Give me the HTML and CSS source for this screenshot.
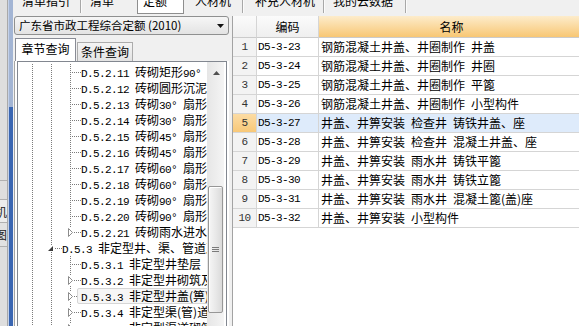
FILE: index.html
```html
<!DOCTYPE html>
<html lang="zh-CN">
<head>
<meta charset="utf-8">
<title>定额</title>
<link rel="stylesheet" href="styles.css">
</head>
<body>
<div class="app">
  <aside class="edge">
    <div class="edge-grey">
      <div class="edge-top"></div>
      <div class="edge-cell"></div>
      <div class="edge-cell frag">机</div>
      <div class="edge-cell frag tall">图</div>
      <div class="edge-rest"></div>
    </div>
    <div class="edge-blue"></div>
  </aside>

  <div class="main">
    <nav class="topbar">
      <div class="ttab t1"><span>清单指引</span></div>
      <div class="ttab t2"><span>清单</span></div>
      <div class="ttab t3 on"><span>定额</span></div>
      <div class="ttab t4"><span>人材机</span></div>
      <div class="ttab t5"><span>补充人材机</span></div>
      <div class="ttab t6"><span>我的云数据</span></div>
    </nav>

    <div class="content">
      <section class="lpanel">
        <div class="combo">
          <span class="combo-text">广东省市政工程综合定额 (2010)</span>
          <svg class="caret" width="7" height="4" viewBox="0 0 7 4"><path d="M0 0H7L3.5 4Z" fill="#111"/></svg>
        </div>
        <div class="qtabs">
          <div class="qtab on">章节查询</div>
          <div class="qtab">条件查询</div>
        </div>
        <div class="page">
          <div class="treebox">
            <div class="tree">
              <div class="row"><span class="gd"></span><span class="gd"></span><span class="nd"></span><span class="txt"><span class="m">D.5.2.11 </span>砖砌矩形<span class="m">90° </span>三通雨水检查井</span></div>
              <div class="row"><span class="gd"></span><span class="gd"></span><span class="nd"></span><span class="txt"><span class="m">D.5.2.12 </span>砖砌圆形沉泥井</span></div>
              <div class="row"><span class="gd"></span><span class="gd"></span><span class="nd"></span><span class="txt"><span class="m">D.5.2.13 </span>砖砌<span class="m">30° </span>扇形雨水检查井</span></div>
              <div class="row"><span class="gd"></span><span class="gd"></span><span class="nd"></span><span class="txt"><span class="m">D.5.2.14 </span>砖砌<span class="m">30° </span>扇形污水检查井</span></div>
              <div class="row"><span class="gd"></span><span class="gd"></span><span class="nd"></span><span class="txt"><span class="m">D.5.2.15 </span>砖砌<span class="m">45° </span>扇形雨水检查井</span></div>
              <div class="row"><span class="gd"></span><span class="gd"></span><span class="nd"></span><span class="txt"><span class="m">D.5.2.16 </span>砖砌<span class="m">45° </span>扇形污水检查井</span></div>
              <div class="row"><span class="gd"></span><span class="gd"></span><span class="nd"></span><span class="txt"><span class="m">D.5.2.17 </span>砖砌<span class="m">60° </span>扇形雨水检查井</span></div>
              <div class="row"><span class="gd"></span><span class="gd"></span><span class="nd"></span><span class="txt"><span class="m">D.5.2.18 </span>砖砌<span class="m">60° </span>扇形污水检查井</span></div>
              <div class="row"><span class="gd"></span><span class="gd"></span><span class="nd"></span><span class="txt"><span class="m">D.5.2.19 </span>砖砌<span class="m">90° </span>扇形雨水检查井</span></div>
              <div class="row"><span class="gd"></span><span class="gd"></span><span class="nd"></span><span class="txt"><span class="m">D.5.2.20 </span>砖砌<span class="m">90° </span>扇形污水检查井</span></div>
              <div class="row"><span class="gd"></span><span class="gd"></span><span class="nd last"><svg class="exp" width="7" height="9" viewBox="0 0 7 9"><rect width="7" height="9" fill="#fff"/><path d="M1.5 0.5L5.5 4.5L1.5 8.5Z" fill="#fff" stroke="#8c8c8c"/></svg></span><span class="txt"><span class="m">D.5.2.21 </span>砖砌雨水进水井</span></div>
              <div class="row"><span class="gd"></span><span class="nd"><svg class="col" width="7" height="7" viewBox="0 0 7 7"><rect width="7" height="7" fill="#fff"/><path d="M6 1V6H1Z" fill="#3c3c3c"/></svg></span><span class="txt"><span class="m">D.5.3 </span>非定型井、渠、管道及构筑物</span></div>
              <div class="row"><span class="gd"></span><span class="gd"></span><span class="nd"></span><span class="txt"><span class="m">D.5.3.1 </span>非定型井垫层</span></div>
              <div class="row"><span class="gd"></span><span class="gd"></span><span class="nd"><svg class="exp" width="7" height="9" viewBox="0 0 7 9"><rect width="7" height="9" fill="#fff"/><path d="M1.5 0.5L5.5 4.5L1.5 8.5Z" fill="#fff" stroke="#8c8c8c"/></svg></span><span class="txt"><span class="m">D.5.3.2 </span>非定型井砌筑及抹灰</span></div>
              <div class="row"><span class="gd"></span><span class="gd"></span><span class="nd"><svg class="exp" width="7" height="9" viewBox="0 0 7 9"><rect width="7" height="9" fill="#fff"/><path d="M1.5 0.5L5.5 4.5L1.5 8.5Z" fill="#fff" stroke="#8c8c8c"/></svg></span><span class="txt hl"><span class="m">D.5.3.3 </span>非定型井盖(箅)制作安装</span></div>
              <div class="row"><span class="gd"></span><span class="gd"></span><span class="nd"><svg class="exp" width="7" height="9" viewBox="0 0 7 9"><rect width="7" height="9" fill="#fff"/><path d="M1.5 0.5L5.5 4.5L1.5 8.5Z" fill="#fff" stroke="#8c8c8c"/></svg></span><span class="txt"><span class="m">D.5.3.4 </span>非定型渠(管)道垫层</span></div>
              <div class="row"><span class="gd"></span><span class="gd"></span><span class="nd"><svg class="exp" width="7" height="9" viewBox="0 0 7 9"><rect width="7" height="9" fill="#fff"/><path d="M1.5 0.5L5.5 4.5L1.5 8.5Z" fill="#fff" stroke="#8c8c8c"/></svg></span><span class="txt"><span class="m">D.5.3.5 </span>非定型渠道砌筑</span></div>
            </div>
            <div class="vscroll">
              <div class="sbtn"><svg width="7" height="4" viewBox="0 0 7 4"><path d="M3.5 0L7 4H0Z" fill="#505050"/></svg></div>
              <div class="thumb">
                <svg width="7" height="6" viewBox="0 0 7 6"><path d="M0 0.5H7M0 2.5H7M0 4.5H7" stroke="#7a7a7a" stroke-width="1"/></svg>
              </div>
            </div>
          </div>
        </div>
      </section>

      <section class="grid">
        <div class="c h"></div>
        <div class="c h">编码</div>
        <div class="c h sort">名称</div>

        <div class="c n m">1</div><div class="c code m">D5-3-23</div><div class="c name">钢筋混凝土井盖、井圈制作 井盖</div>
        <div class="c n m">2</div><div class="c code m">D5-3-24</div><div class="c name">钢筋混凝土井盖、井圈制作 井圈</div>
        <div class="c n m">3</div><div class="c code m">D5-3-25</div><div class="c name">钢筋混凝土井盖、井圈制作 平篦</div>
        <div class="c n m">4</div><div class="c code m">D5-3-26</div><div class="c name">钢筋混凝土井盖、井圈制作 小型构件</div>
        <div class="c n m cur">5</div><div class="c code m sel">D5-3-27</div><div class="c name sel">井盖、井箅安装 检查井 铸铁井盖、座</div>
        <div class="c n m">6</div><div class="c code m">D5-3-28</div><div class="c name">井盖、井箅安装 检查井 混凝土井盖、座</div>
        <div class="c n m">7</div><div class="c code m">D5-3-29</div><div class="c name">井盖、井箅安装 雨水井 铸铁平篦</div>
        <div class="c n m">8</div><div class="c code m">D5-3-30</div><div class="c name">井盖、井箅安装 雨水井 铸铁立篦</div>
        <div class="c n m">9</div><div class="c code m">D5-3-31</div><div class="c name">井盖、井箅安装 雨水井 混凝土篦(盖)座</div>
        <div class="c n m">10</div><div class="c code m">D5-3-32</div><div class="c name">井盖、井箅安装 小型构件</div>
      </section>
    </div>
  </div>
</div>
</body>
</html>
```

FILE: styles.css
```css
* { box-sizing: border-box; }
html, body { margin: 0; padding: 0; }
body {
  background: #f0f0f0;
  font-family: "Noto Sans CJK SC", "Noto Sans", sans-serif;
  font-size: 12px;
  color: #000;
  overflow: hidden;
}
.app {
  display: flex;
  width: 579px;
  height: 326px;
  overflow: hidden;
}

/* left window edge */
.edge { display: flex; width: 13px; flex: none; }
.edge-grey {
  width: 8px;
  display: flex;
  flex-direction: column;
  background: #dedede;
  border-right: 1px solid #a9a9a9;
}
.edge-top { height: 181px; border-bottom: 1px solid #b0b0b0; flex: none; }
.edge-cell {
  height: 19px;
  flex: none;
  border-bottom: 1px solid #b0b0b0;
}
.frag {
  height: 23px;
  display: flex;
  justify-content: flex-end;
  align-items: center;
  overflow: hidden;
  white-space: nowrap;
  color: #222;
  background: #ececec;
}
.frag.tall { height: 24px; background: #e2e2e2; }
.edge-rest { flex: 1; }
.edge-blue {
  width: 5px;
  background: linear-gradient(to bottom, #a3b5d4 0, #a3b5d4 107px, #3a66b2 107px, #3a66b2 100%);
  box-shadow: inset 1px 0 #c4d1e8;
}

/* main */
.main { flex: 1; min-width: 0; display: flex; flex-direction: column; }
.topbar {
  display: flex;
  align-items: flex-start;
  height: 14px;
  flex: none;
  overflow: hidden;
}
.ttab {
  height: 13px;
  overflow: hidden;
  white-space: nowrap;
  line-height: 12px;
  border-right: 1px solid #a8a8a8;
  box-shadow: 1px 0 #fbfbfb;
  flex: none;
}
.ttab span { display: block; margin-top: -5px; }
.t1 { width: 68px; padding-left: 9px; }
.t2 { width: 56px; padding-left: 9px; border-right: none; box-shadow: none; }
.t3 {
  width: 47px;
  height: 14px;
  padding-left: 5px;
  background: #fff;
  border: 1px solid #8e8e8e;
  border-top: none;
  box-shadow: none;
}
.t4 { width: 59px; padding-left: 11px; }
.t5 { width: 81px; padding-left: 12px; }
.t6 { width: 82px; padding-left: 9px; }

.content { flex: 1; min-height: 0; display: flex; gap: 2px; }

/* left panel */
.lpanel {
  width: 217px;
  flex: none;
  padding: 2px 1px 0;
  display: flex;
  flex-direction: column;
  overflow: hidden;
}
.combo {
  height: 19px;
  flex: none;
  display: flex;
  align-items: center;
  justify-content: space-between;
  padding: 0 4px;
  border: 1px solid #8f9090;
  border-radius: 3px;
  background: linear-gradient(#f6f6f6, #e3e3e3);
  white-space: nowrap;
}
.combo-text { line-height: 17px; font-size: 11.5px; }

.qtabs {
  display: flex;
  align-items: flex-end;
  gap: 1px;
  height: 23px;
  flex: none;
  margin-top: 3px;
  padding-left: 1px;
}
.qtab {
  width: 56px;
  height: 19px;
  padding-top: 1px;
  line-height: 16px;
  text-align: center;
  background: linear-gradient(#f4f4f4, #e3e3e3);
  border: 1px solid #acacac;
  border-bottom: none;
}
.qtab.on {
  width: 61px;
  height: 23px;
  padding-top: 2px;
  background: #fff;
  border-color: #898c95;
}

.page {
  flex: 1;
  min-height: 0;
  background: #fff;
  border-left: 1px solid #a5a5a5;
  padding: 0 2px;
}
.treebox {
  height: 300px;
  display: flex;
  background: #fff;
  border: 1px solid #828790;
  padding-right: 2px;
}
.tree {
  flex: 1;
  min-width: 0;
  overflow: hidden;
  padding-top: 2px;
}
.row {
  display: flex;
  height: 16px;
  white-space: nowrap;
}
.gd {
  width: 19px;
  flex: none;
  background-image: repeating-linear-gradient(to bottom, #7c7c7c 0 1px, transparent 1px 2px);
  background-size: 1px 16px;
  background-position: 14px 0;
  background-repeat: no-repeat;
}
.nd {
  width: 25px;
  flex: none;
  display: flex;
  align-items: center;
  background-image:
    repeating-linear-gradient(to bottom, #7c7c7c 0 1px, transparent 1px 2px),
    repeating-linear-gradient(to right, #7c7c7c 0 1px, transparent 1px 2px);
  background-size: 1px 16px, 9px 1px;
  background-position: 14px 0, 16px 8px;
  background-repeat: no-repeat;
}
.nd.last { background-size: 1px 8px, 9px 1px; }
.exp { margin-left: 11px; }
.col { margin-left: 10px; }
.txt { line-height: 16px; flex: none; }
.txt.hl {
  height: 16px;
  line-height: 14px;
  margin-left: -4px;
  padding: 0 2px 0 3px;
  background: #f6f6f6;
  border: 1px solid #d6d6d6;
  border-radius: 2px;
}
.m {
  font-family: "Liberation Mono", "DejaVu Sans Mono", monospace;
  font-size: 11px;
  letter-spacing: -0.6px;
}

.vscroll {
  width: 17px;
  flex: none;
  display: flex;
  flex-direction: column;
  background: linear-gradient(to right, #e6e6e6, #f4f4f4);
}
.sbtn {
  height: 17px;
  flex: none;
  display: flex;
  justify-content: center;
  padding-top: 9px;
  padding-left: 1px;
}
.sbtn svg { display: block; }
.thumb {
  margin-top: 107px;
  margin-left: 1px;
  width: 15px;
  height: 127px;
  flex: none;
  display: flex;
  align-items: center;
  justify-content: center;
  border: 1px solid #979797;
  border-radius: 2px;
  background: linear-gradient(to right, #f6f6f6, #e6e6e6 60%, #dadada);
  box-shadow: inset 1px 1px #fff;
}

/* grid */
.grid {
  flex: 1;
  min-width: 0;
  margin-top: 2px;
  background: #fff;
  border-left: 1px solid #a3a3a3;
  overflow: hidden;
  display: grid;
  grid-template-columns: 24px 62px 266px;
  grid-template-rows: 22px;
  grid-auto-rows: 19px;
  align-content: start;
}
.c {
  border-right: 1px solid #d5d5d5;
  border-bottom: 1px solid #d5d5d5;
  white-space: nowrap;
  overflow: hidden;
  line-height: 18px;
}
.h {
  line-height: 21px;
  text-align: center;
  background: linear-gradient(#fbfbfb, #efefef);
  border-bottom-color: #cbcbcb;
}
.h.sort { background: linear-gradient(#fdeccb, #f8c774); }
.n { text-align: center; background: #f3f3f3; color: #333; }
.n.cur { background: linear-gradient(#fcdca4, #f8c878); }
.code { padding-left: 1px; }
.name { padding-left: 2px; word-spacing: 3.3px; }
.sel { background: #deebfb; }
```
